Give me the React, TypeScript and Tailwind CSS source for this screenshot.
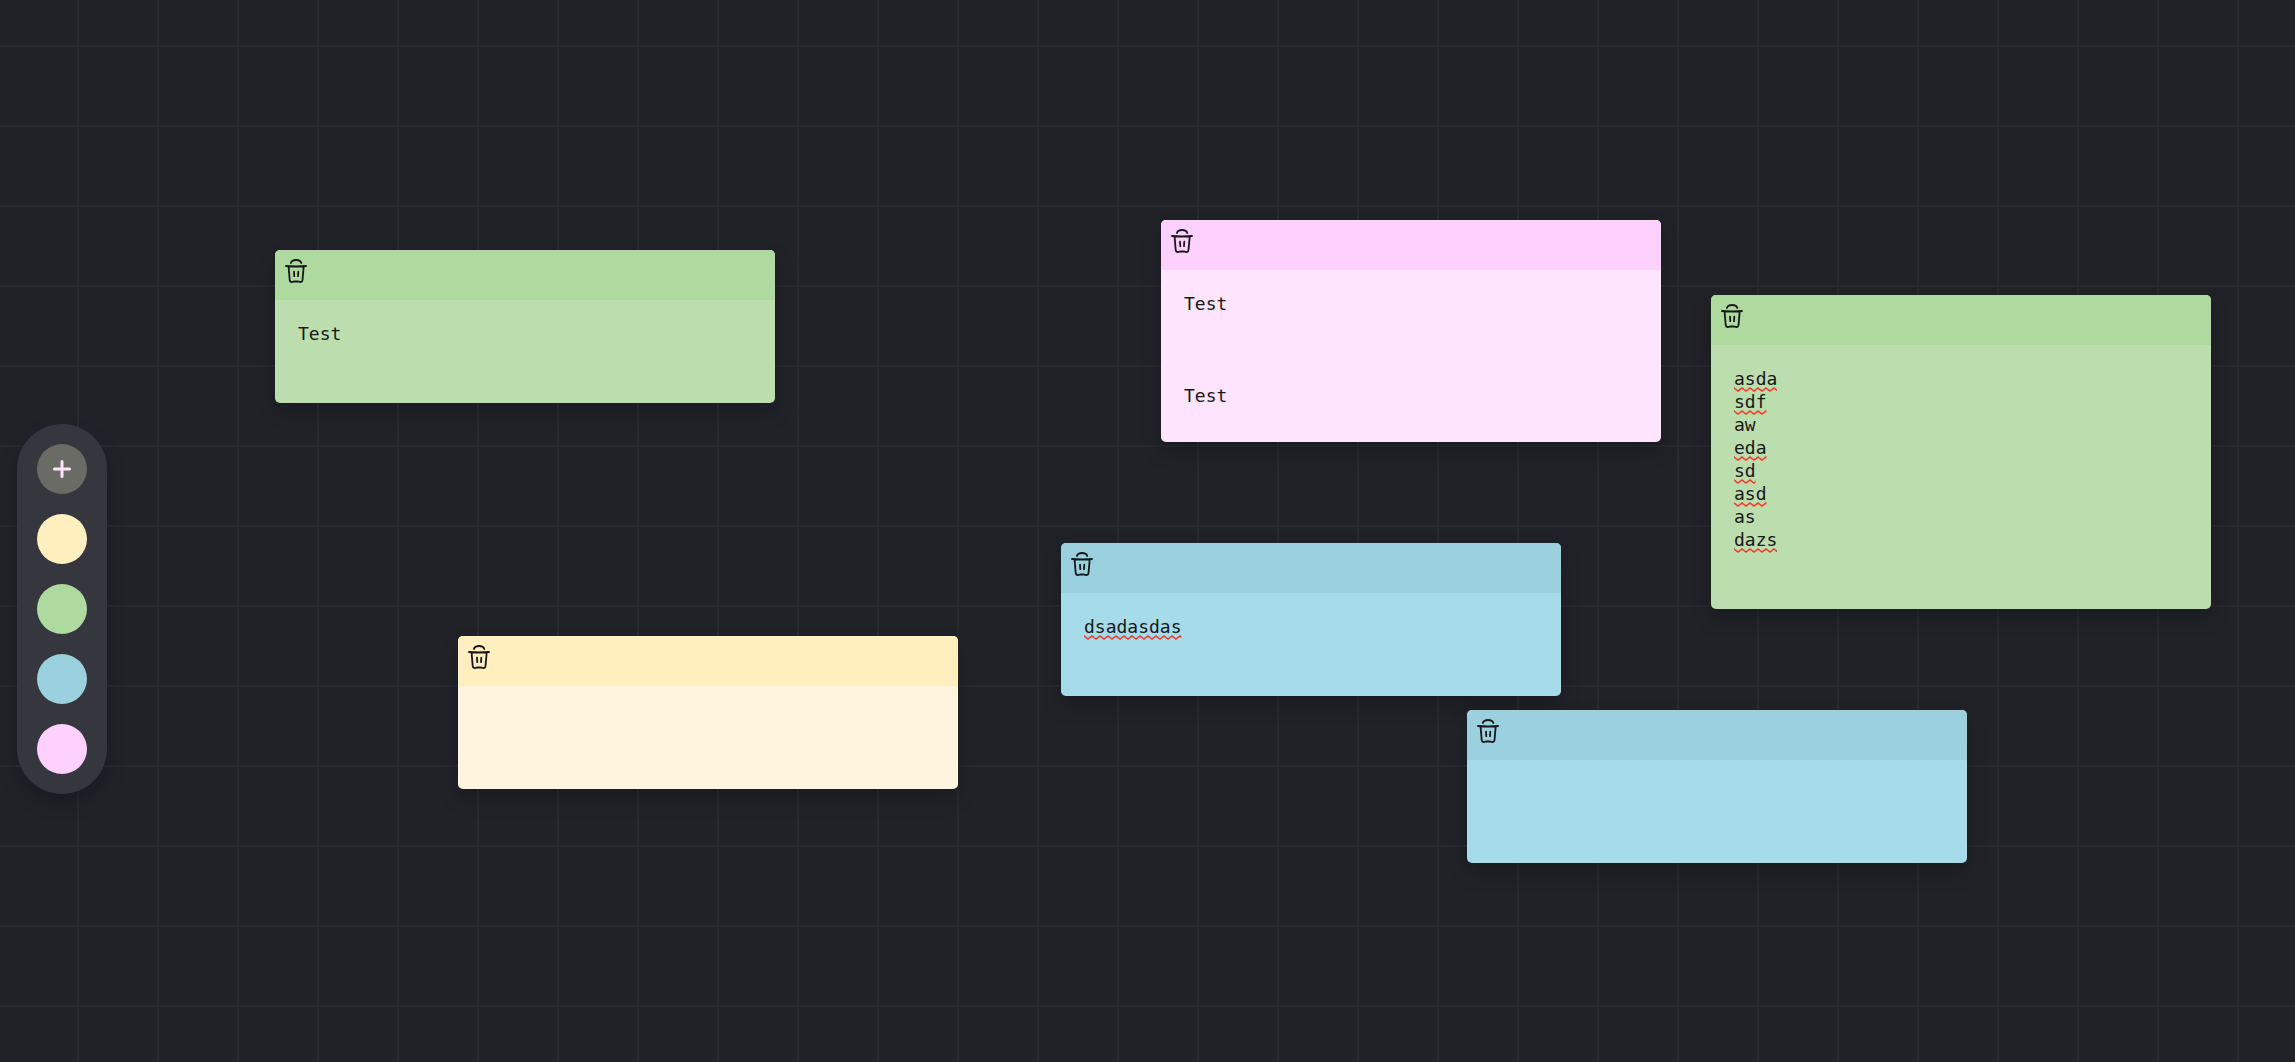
import { useId, useState } from "react";

type NoteColor = "yellow" | "green" | "blue" | "pink";

type Note = {
  id: number;
  color: NoteColor;
  x: number;
  y: number;
  rows: number;
  body: string;
  misspelled?: string[];
};

const HEADER: Record<NoteColor, string> = {
  yellow: "bg-[#ffeebe]",
  green: "bg-[#afda9f]",
  blue: "bg-[#9bd1de]",
  pink: "bg-[#fed0fd]",
};

const BODY: Record<NoteColor, string> = {
  yellow: "bg-[#fff5df]",
  green: "bg-[#bcdeaf]",
  blue: "bg-[#a6dce9]",
  pink: "bg-[#fee5fd]",
};

const COLORS: NoteColor[] = ["yellow", "green", "blue", "pink"];

const NOTES: Note[] = [
  { id: 1, color: "green", x: 275, y: 250, rows: 2, body: "Test" },
  { id: 2, color: "pink", x: 1161, y: 220, rows: 5, body: "Test\n\n\n\nTest" },
  {
    id: 3,
    color: "green",
    x: 1711,
    y: 295,
    rows: 9,
    body: "asda\nsdf\naw\neda\nsd\nasd\nas\ndazs",
    misspelled: ["asda", "sdf", "eda", "sd", "asd", "dazs"],
  },
  { id: 4, color: "blue", x: 1061, y: 543, rows: 2, body: "dsadasdas", misspelled: ["dsadasdas"] },
  { id: 5, color: "yellow", x: 458, y: 636, rows: 2, body: "" },
  { id: 6, color: "blue", x: 1467, y: 710, rows: 2, body: "" },
];

function TrashIcon() {
  return (
    <svg viewBox="0 0 24 24" className="h-6 w-6" fill="none" stroke="#18181a" strokeWidth="1.8" strokeLinecap="round" strokeLinejoin="round">
      <path d="M2 7Q12 8 22 7M4.6 7.6l1.1 13.6q.2 1.8 1.8 1.8 1.4 0 2.4-.5h4.4q1 .5 2.4.5 1.6 0 1.8-1.8L19.7 7.6M6.9 4q.9-3 5.2-3t5.2 3M10 12.6l.3 4.6M14.3 12.6l-.3 4.6" />
    </svg>
  );
}

function Squiggle({ length }: { length: number }) {
  const id = useId();
  return (
    <svg className="h-[5px]" style={{ width: `${length}ch` }}>
      <pattern id={id} width="8" height="5" patternUnits="userSpaceOnUse">
        <path d="M-4 4L0 1L4 4L8 1L12 4" fill="none" stroke="#f03a2e" strokeWidth="1.5" />
      </pattern>
      <rect width="100%" height="5" fill={`url(#${id})`} />
    </svg>
  );
}

function NoteCard({ note }: { note: Note }) {
  const [text, setText] = useState(note.body);
  return (
    <article
      className={`absolute w-[500px] overflow-hidden rounded-[5px] shadow-[0_10px_20px_rgba(0,0,0,0.2)] ${BODY[note.color]}`}
      style={{ left: note.x, top: note.y }}
    >
      <header className={`flex h-[50px] items-start px-[9px] pt-[9px] ${HEADER[note.color]}`}>
        <button type="button" aria-label="Delete note">
          <TrashIcon />
        </button>
      </header>
      <div className="relative px-[23px] pt-[22px] pb-[35px] font-['DejaVu_Sans_Mono',monospace] text-[18px] leading-[23px]">
        <textarea
          aria-label="Note text"
          rows={note.rows}
          value={text}
          onChange={(e) => setText(e.target.value)}
          className="block w-full resize-none bg-transparent text-[#18181a] outline-none"
        />
        {/* spelling marks, one row per line of text */}
        <div className="pointer-events-none absolute top-6 left-[23px]" aria-hidden="true">
          {text.split("\n").map((line, i) => (
            <div key={i} className="flex h-[23px] items-end">
              {note.misspelled?.includes(line) && <Squiggle length={line.length} />}
            </div>
          ))}
        </div>
      </div>
    </article>
  );
}

function Controls() {
  return (
    <nav
      aria-label="Note colors"
      className="absolute top-[424px] left-[17px] flex flex-col gap-5 rounded-full bg-[#35363e] p-5 shadow-[0_10px_20px_rgba(0,0,0,0.2)]"
    >
      <button type="button" aria-label="Add note" className="grid h-[50px] w-[50px] place-items-center rounded-full bg-[#6b6b65]">
        <svg viewBox="0 0 18 18" className="h-[18px] w-[18px]" fill="none" stroke="#fee5fd" strokeWidth="3" strokeLinecap="round">
          <path d="M9 1.5v15M1.5 9h15" />
        </svg>
      </button>
      {COLORS.map((color) => (
        <button key={color} type="button" aria-label={color} className={`h-[50px] w-[50px] rounded-full ${HEADER[color]}`} />
      ))}
    </nav>
  );
}

export default function App() {
  return (
    <main className="relative min-h-screen w-full overflow-hidden bg-[#212228] bg-[linear-gradient(to_right,#292a2f_2px,transparent_2px),linear-gradient(to_bottom,#292a2f_2px,transparent_2px)] bg-[length:80px_80px] bg-[position:77px_45px]">
      {NOTES.map((note) => (
        <NoteCard key={note.id} note={note} />
      ))}
      <Controls />
    </main>
  );
}
